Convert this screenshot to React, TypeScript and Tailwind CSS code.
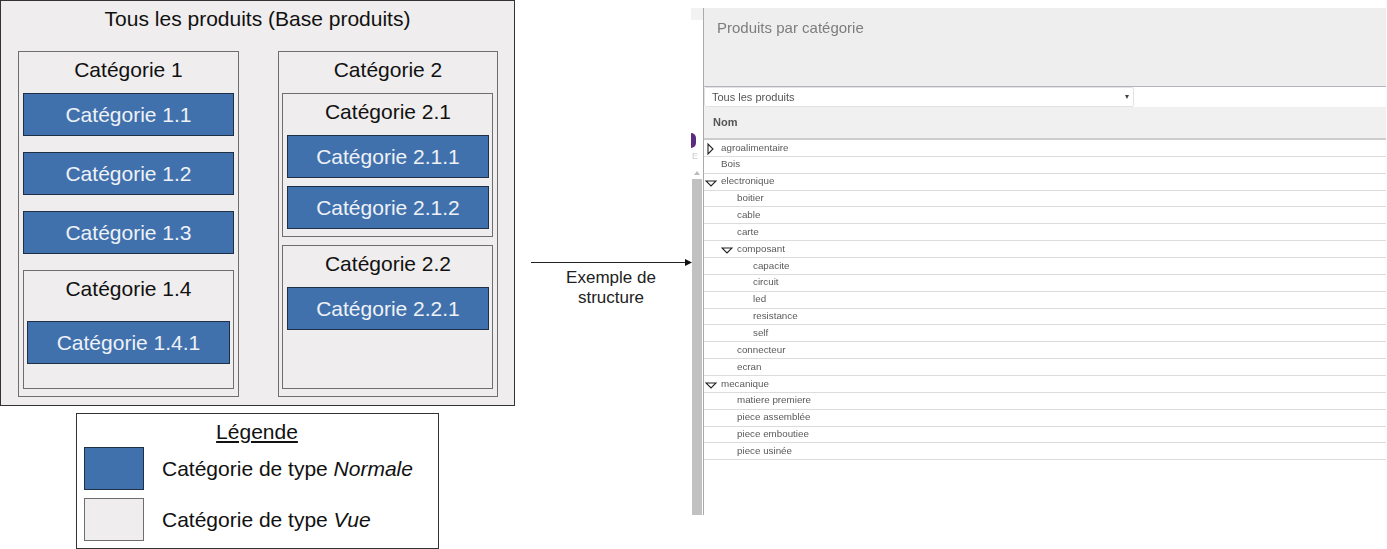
import type { ReactNode } from "react";

function Blue({ label, className = "" }: { label: string; className?: string }) {
	return (
		<div
			className={`h-[43px] flex items-center justify-center bg-[#4171ad] border border-[#1f2f45] text-[#eef2f7] ${className}`}
		>
			{label}
		</div>
	);
}

function View({
	title,
	className = "",
	children,
}: {
	title: string;
	className?: string;
	children: ReactNode;
}) {
	return (
		<div className={`border border-[#6e6e6e] bg-[#efeded] ${className}`}>
			<div className="h-[34px] pt-[1px] flex items-center justify-center text-[#111]">
				{title}
			</div>
			{children}
		</div>
	);
}

function Down({ className = "" }: { className?: string }) {
	return (
		<svg width="12" height="7" viewBox="0 0 12 7" className={className}>
			<path d="M1 1 H11 L6 6 Z" fill="none" stroke="#222" strokeWidth="1.1" />
		</svg>
	);
}

const rows: { name: string; level: number; open?: boolean; closed?: boolean }[] = [
	{ name: "agroalimentaire", level: 0, closed: true },
	{ name: "Bois", level: 0 },
	{ name: "electronique", level: 0, open: true },
	{ name: "boitier", level: 1 },
	{ name: "cable", level: 1 },
	{ name: "carte", level: 1 },
	{ name: "composant", level: 1, open: true },
	{ name: "capacite", level: 2 },
	{ name: "circuit", level: 2 },
	{ name: "led", level: 2 },
	{ name: "resistance", level: 2 },
	{ name: "self", level: 2 },
	{ name: "connecteur", level: 1 },
	{ name: "ecran", level: 1 },
	{ name: "mecanique", level: 0, open: true },
	{ name: "matiere premiere", level: 1 },
	{ name: "piece assemblée", level: 1 },
	{ name: "piece emboutiee", level: 1 },
	{ name: "piece usinée", level: 1 },
];

const indents = ["pl-[17px]", "pl-[33px]", "pl-[49px]"];

function TreeRow({ name, level, open, closed }: (typeof rows)[number]) {
	return (
		<div
			className={`h-[16.86px] flex items-center border-b border-[#dcdcdc] text-[9.8px] text-[#5a5a5a] relative ${indents[level]}`}
		>
			{open && (
				<Down className={`absolute top-[6px] ${level === 0 ? "left-[1px]" : "left-[17px]"}`} />
			)}
			{closed && (
				<svg width="7" height="12" viewBox="0 0 7 12" className="absolute left-[3px] top-[3px]">
					<path d="M1 1 V11 L6 6 Z" fill="none" stroke="#222" strokeWidth="1.1" />
				</svg>
			)}
			{name}
		</div>
	);
}

export default function App() {
	return (
		<div className="w-[1387px] h-[549px] overflow-hidden bg-white flex font-['Liberation_Sans',Arial,sans-serif]">
			{/* schema */}
			<div className="w-[516px] shrink-0 text-[21px]">
				<div className="w-[515px] h-[406px] border border-[#333] bg-[#efeded]">
					<div className="h-[36px] mb-[14px] flex items-center justify-center text-[#111]">
						Tous les produits (Base produits)
					</div>
					<div className="flex pl-[17px] gap-[39px]">
						<View title="Catégorie 1" className="w-[221px] h-[346px] px-[4px]">
							<div className="pt-[7px] flex flex-col gap-[16px]">
								<Blue label="Catégorie 1.1" />
								<Blue label="Catégorie 1.2" />
								<Blue label="Catégorie 1.3" />
								<View title="Catégorie 1.4" className="h-[119px] px-[3px]">
									<Blue label="Catégorie 1.4.1" className="mt-[16px]" />
								</View>
							</div>
						</View>
						<View title="Catégorie 2" className="w-[220px] h-[346px] px-[3px]">
							<div className="pt-[7px] flex flex-col gap-[8px]">
								<View title="Catégorie 2.1" className="w-[211px] h-[144px] pl-[4px] pr-[3px]">
									<div className="pt-[7px] flex flex-col gap-[8px]">
										<Blue label="Catégorie 2.1.1" />
										<Blue label="Catégorie 2.1.2" />
									</div>
								</View>
								<View title="Catégorie 2.2" className="w-[211px] h-[144px] pl-[4px] pr-[3px]">
									<Blue label="Catégorie 2.2.1" className="mt-[7px]" />
								</View>
							</div>
						</View>
					</div>
				</div>
				{/* legend */}
				<div className="ml-[76px] mt-[7px] w-[363px] h-[136px] border border-[#333] bg-white px-[7px] text-[#111]">
					<div className="h-[33px] flex items-end justify-center pr-[1px] pb-[2px] underline leading-[26px]">
						Légende
					</div>
					<div className="flex items-center h-[43px] gap-[18px]">
						<div className="w-[60px] h-[43px] bg-[#4171ad] border border-[#1f2f45]" />
						<span>
							Catégorie de type <i>Normale</i>
						</span>
					</div>
					<div className="flex items-center h-[43px] mt-[8px] gap-[18px]">
						<div className="w-[60px] h-[43px] bg-[#efeded] border border-[#6e6e6e]" />
						<span>
							Catégorie de type <i>Vue</i>
						</span>
					</div>
				</div>
			</div>

			{/* arrow */}
			<div className="w-[175px] shrink-0 pl-[15px] pt-[258px]">
				<svg width="161" height="9" viewBox="0 0 161 9" className="block">
					<path d="M0 4.5 H155" stroke="#222" strokeWidth="1" />
					<path d="M154 1 L161 4.5 L154 8 Z" fill="#111" />
				</svg>
				<div className="pt-[1px] text-center text-[17px] leading-[20px] text-[#222]">
					Exemple de
					<br />
					structure
				</div>
			</div>

			{/* app screenshot */}
			<div className="w-[695px] shrink-0 h-[507px] mt-[8px] flex blur-[0.3px]">
				<div className="w-[12px] shrink-0 flex flex-col items-start">
					<div className="h-[12px] w-full bg-[#f3f2f2]" />
					<div className="mt-[113px] w-[5px] h-[15px] rounded-r-full bg-[#5c2d7e]" />
					<div className="ml-[1px] mt-[2px] h-[12px] text-[9px] leading-[12px] text-[#ccc]">E</div>
					<div className="ml-[3px] mt-[9px] w-0 h-0 border-x-[3px] border-x-transparent border-b-[4px] border-b-[#bbb]" />
					<div className="ml-[1px] mt-[4px] w-[10px] flex-1 bg-[#c1c1c1]" />
				</div>
				<div className="flex-1 border-l border-[#aaa] flex flex-col">
					<div className="h-[79px] bg-[#efeeee] border-b border-[#b5b3bb] pl-[13px] pt-[11px] text-[15px] leading-[18px] text-[#7d7d7d]">
						Produits par catégorie
					</div>
					<div className="h-[20px] w-[430px] bg-white border border-[#e2e2e2] rounded-[2px] flex items-center justify-between pl-[7px] pr-[4px] text-[11px] text-[#555]">
						Tous les produits
						<span className="w-0 h-0 border-x-[2.5px] border-x-transparent border-t-[4px] border-t-[#444]" />
					</div>
					<div className="h-[33px] bg-[#f0f0f0] border-b-2 border-[#cccccc] pl-[9px] flex items-center text-[11px] font-bold text-[#555]">
						Nom
					</div>
					{rows.map((r) => (
						<TreeRow key={r.name} {...r} />
					))}
				</div>
			</div>
		</div>
	);
}
